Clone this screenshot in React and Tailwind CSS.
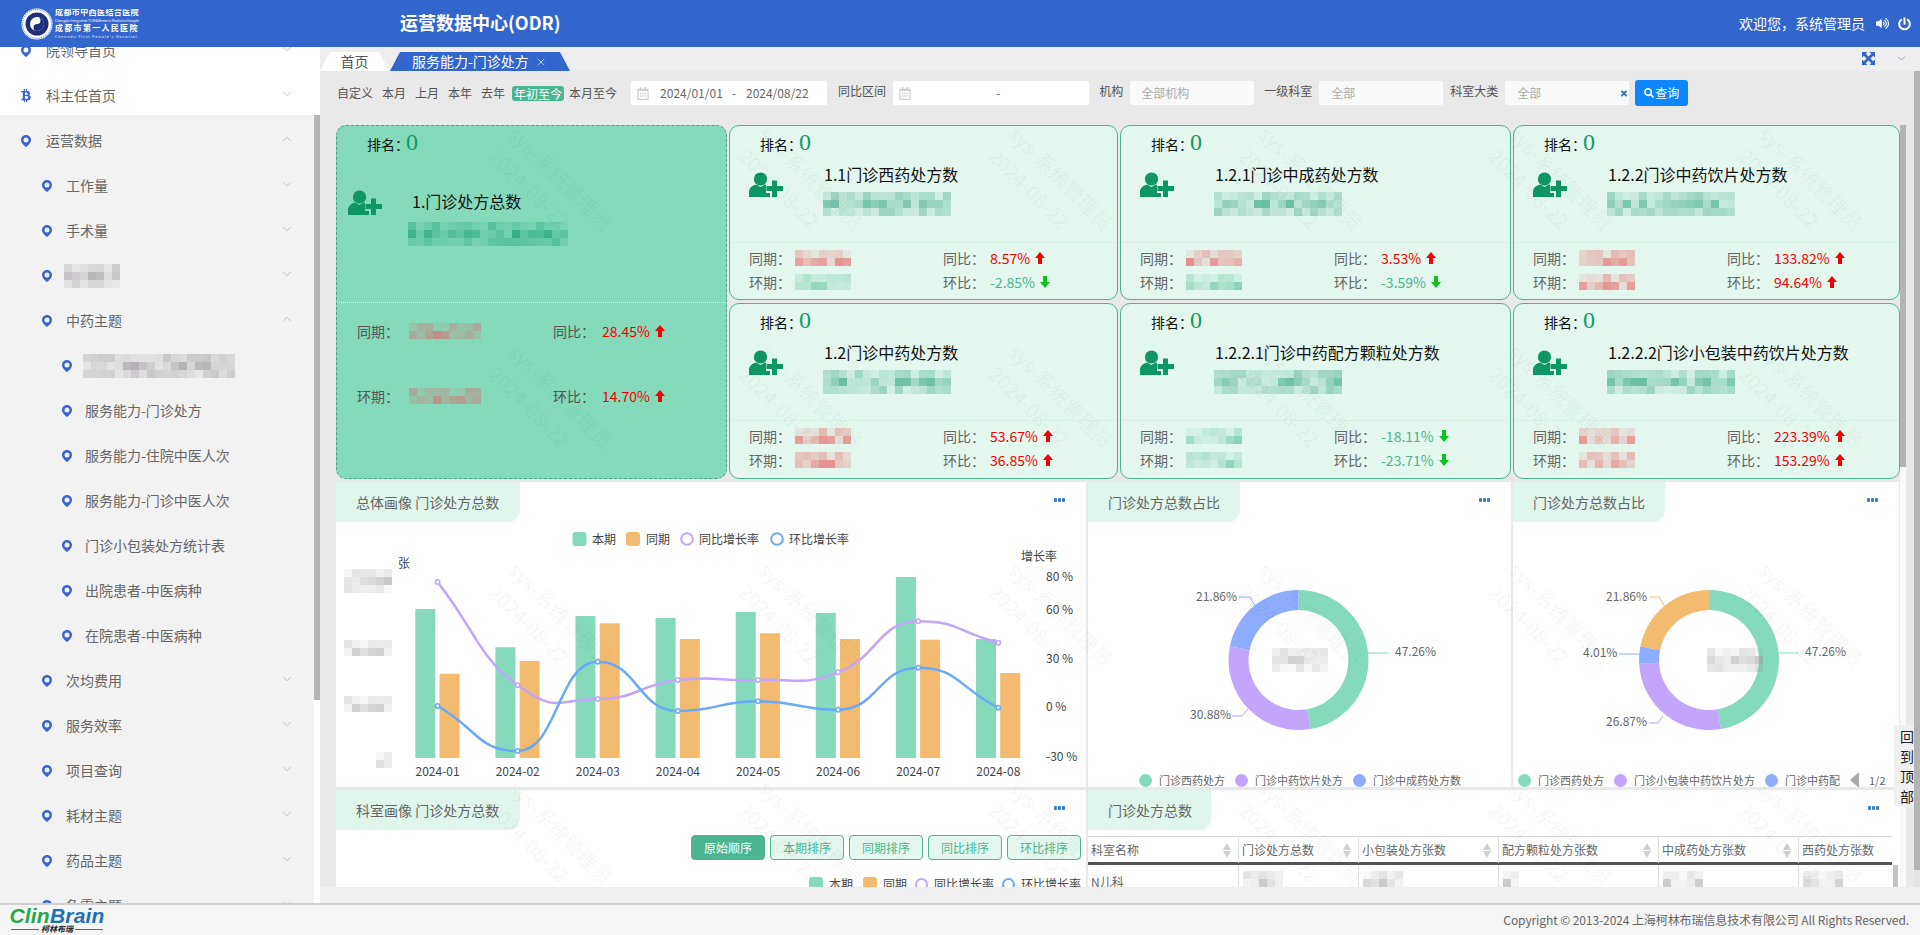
import React from "react";
import { ChevronDown, ChevronUp, X } from "lucide-react";
import { FaBtc, FaVolumeUp, FaPowerOff, FaSearch, FaRegCalendarAlt, FaTimes } from "react-icons/fa";

const FONT = '"Noto Sans CJK SC","Noto Sans",sans-serif';

function rng(seed) {
  let s = seed * 9301 + 49297;
  return () => {
    s = (s * 9301 + 49297) % 233280;
    return s / 233280;
  };
}

function Mosaic({ cols, rows = 3, color = [60, 170, 135], seed = 1, max = 0.75, className = "" }) {
  const r = rng(seed);
  return (
    <div className={"flex flex-col shrink-0 " + className}>
      {Array.from({ length: rows }).map((_, y) => (
        <div key={y} className="flex">
          {Array.from({ length: cols }).map((_, x) => {
            const edge = y === 0 && rows > 1 ? 0.6 : y === rows - 1 && rows > 2 ? 0.6 : 1;
            const a = (0.2 + r() * 0.8) * max * edge;
            return (
              <div
                key={x}
                className="w-[8px] h-[8px]"
                style={{ backgroundColor: `rgba(${color[0]},${color[1]},${color[2]},${a.toFixed(2)})` }}
              />
            );
          })}
        </div>
      ))}
    </div>
  );
}

function Pin({ className = "" }) {
  return (
    <svg viewBox="0 0 10 12" className={"w-[10px] h-[12px] shrink-0 " + className}>
      <path
        fillRule="evenodd"
        fill="#3a63d0"
        d="M5 0C2.2 0 0 2.2 0 5c0 3 3.2 5.6 5 7 1.8-1.4 5-4 5-7 0-2.8-2.2-5-5-5zm0 2.5a2.5 2.5 0 1 1 0 5 2.5 2.5 0 0 1 0-5z"
      />
    </svg>
  );
}

function SideRow({ label, level = 0, icon, chevron, mosaic }) {
  const pad = level === 0 ? "pl-[21px]" : level === 1 ? "pl-[42px]" : "pl-[62px]";
  const gap = level === 0 ? "gap-[15px]" : level === 1 ? "gap-[14px]" : "gap-[13px]";
  return (
    <div className={"h-[45px] flex items-center pr-[26px] text-[14px] text-[#666] " + pad + " " + gap}>
      {icon === "btc" ? <FaBtc className="w-[10px] h-[13px] text-[#3a63d0] shrink-0" /> : <Pin />}
      {mosaic ? <Mosaic cols={mosaic} color={[150, 145, 150]} seed={mosaic} className="-ml-[2px]" /> : <span>{label}</span>}
      <span className="flex-1" />
      {chevron === "down" && <ChevronDown size={14} strokeWidth={1} className="text-[#999] -mt-[4px]" />}
      {chevron === "up" && <ChevronUp size={14} strokeWidth={1} className="text-[#999] -mt-[4px]" />}
    </div>
  );
}

function Sidebar() {
  return (
    <div className="relative w-[320px] h-full overflow-hidden bg-white shrink-0">
      <div className="-mt-[19px]">
        <SideRow label="院领导首页" chevron="down" />
        <SideRow label="科主任首页" icon="btc" chevron="down" />
        <div className="-mt-[3px] pt-[3px] bg-[#f2f2f2] h-[900px]">
          <SideRow label="运营数据" chevron="up" />
          <SideRow level={1} label="工作量" chevron="down" />
          <SideRow level={1} label="手术量" chevron="down" />
          <SideRow level={1} mosaic={7} chevron="down" />
          <SideRow level={1} label="中药主题" chevron="up" />
          <SideRow level={2} mosaic={19} />
          <SideRow level={2} label="服务能力-门诊处方" />
          <SideRow level={2} label="服务能力-住院中医人次" />
          <SideRow level={2} label="服务能力-门诊中医人次" />
          <SideRow level={2} label="门诊小包装处方统计表" />
          <SideRow level={2} label="出院患者-中医病种" />
          <SideRow level={2} label="在院患者-中医病种" />
          <SideRow level={1} label="次均费用" chevron="down" />
          <SideRow level={1} label="服务效率" chevron="down" />
          <SideRow level={1} label="项目查询" chevron="down" />
          <SideRow level={1} label="耗材主题" chevron="down" />
          <SideRow level={1} label="药品主题" chevron="down" />
          <SideRow level={1} label="急需主题" chevron="down" />
        </div>
      </div>
      <div className="absolute right-0 top-0 bottom-0 w-[6px] bg-white">
        <div className="mt-[68px] h-[585px] bg-[#b4b4b4]" />
      </div>
    </div>
  );
}

function HospitalLogo() {
  return (
    <svg viewBox="0 0 32 32" className="w-[32px] h-[32px] shrink-0">
      <circle cx="16" cy="16" r="15.5" fill="#fff" />
      <circle cx="16" cy="16" r="14.5" fill="none" stroke="#3366cc" strokeWidth="1" strokeDasharray="1 1.2" />
      <circle cx="16" cy="16" r="11.5" fill="#1c2f78" />
      <circle cx="16" cy="16" r="7" fill="#fff" />
      <path d="M16 9a7 7 0 0 1 0 14 3.5 3.5 0 0 1 0-7 3.5 3.5 0 0 0 0-7z" fill="#1c2f78" />
    </svg>
  );
}

function Header() {
  return (
    <div className="h-[47px] bg-[#3366cc] flex items-center text-white shrink-0 relative z-20">
      <div className="pl-[21px] w-[400px] flex items-center gap-[2px] shrink-0">
        <HospitalLogo />
        <div className="flex flex-col leading-none w-[84px] overflow-hidden">
          <span className="text-[8px] font-bold tracking-[0.4px] h-[9px] whitespace-nowrap" style={{ fontFamily: '"Liberation Serif","Noto Sans CJK SC",serif' }}>成都市中西医结合医院</span>
          <span className="text-[3.5px] h-[7px] pt-[1px] whitespace-nowrap">Chengdu Integrated TCM&Western Medicine Hospital</span>
          <span className="text-[8px] font-bold tracking-[1.3px] h-[9px] whitespace-nowrap" style={{ fontFamily: '"Liberation Serif","Noto Sans CJK SC",serif' }}>成都市第一人民医院</span>
          <span className="text-[3.5px] pt-[1px] tracking-[1px] whitespace-nowrap">Chengdu First People's Hospital</span>
        </div>
      </div>
      <div className="text-[18px] font-bold -mt-[3px]">运营数据中心(ODR)</div>
      <div className="flex-1" />
      <div className="text-[14px] whitespace-nowrap">欢迎您，系统管理员</div>
      <FaVolumeUp className="ml-[11px] w-[13px] h-[13px]" />
      <FaPowerOff className="ml-[9px] mr-[9px] w-[13px] h-[14px]" />
    </div>
  );
}

function Field({ label, className = "" }) {
  return (
    <div className={"flex items-center " + className}>
      <span className="text-[12px] text-[#555] -mt-[4px] whitespace-nowrap">{label}</span>
    </div>
  );
}

function FilterBar() {
  return (
    <div className="flex items-center h-[26px] mt-[9px] pl-[17px] text-[12px] text-[#555] whitespace-nowrap">
      <span>自定义</span>
      <span className="ml-[9px]">本月</span>
      <span className="ml-[9px]">上月</span>
      <span className="ml-[9px]">本年</span>
      <span className="ml-[9px]">去年</span>
      <span className="ml-[7px] px-[2px] bg-[#4cb592] text-white rounded-[3px] leading-[15px]">年初至今</span>
      <span className="ml-[5px]">本月至今</span>
      <div className="ml-[13px] w-[198px] h-[26px] bg-white border border-[#eaeaea] rounded-[3px] flex items-center pl-[6px] text-[#666]">
        <FaRegCalendarAlt className="w-[12px] h-[13px] text-[#cfcfcf]" />
        <span className="ml-[11px]">2024/01/01</span>
        <span className="ml-[9px]">-</span>
        <span className="ml-[10px]">2024/08/22</span>
      </div>
      <Field label="同比区间" className="ml-[10px]" />
      <div className="ml-[6px] w-[198px] h-[26px] bg-white border border-[#eaeaea] rounded-[3px] flex items-center pl-[6px] text-[#666]">
        <FaRegCalendarAlt className="w-[12px] h-[13px] text-[#cfcfcf]" />
        <span className="ml-[85px]">-</span>
      </div>
      <Field label="机构" className="ml-[9px]" />
      <div className="ml-[6px] w-[126px] h-[26px] bg-[#fafafa] border border-[#eaeaea] rounded-[3px] flex items-center pl-[11px] text-[#aaa]">全部机构</div>
      <Field label="一级科室" className="ml-[9px]" />
      <div className="ml-[6px] w-[126px] h-[26px] bg-[#fafafa] border border-[#eaeaea] rounded-[3px] flex items-center pl-[12px] text-[#aaa]">全部</div>
      <Field label="科室大类" className="ml-[6px]" />
      <div className="ml-[6px] w-[126px] h-[26px] bg-[#fafafa] border border-[#eaeaea] rounded-[3px] flex items-center pl-[12px] pr-[1px] text-[#aaa]">
        <span className="flex-1">全部</span>
        <FaTimes className="w-[8px] h-[9px] text-[#2f6fb0]" />
      </div>
      <button className="ml-[5px] w-[53px] h-[26px] bg-[#0e86ff] text-white rounded-[3px] flex items-center justify-center gap-[1px] text-[12px]">
        <FaSearch className="w-[10px] h-[10px]" />
        查询
      </button>
    </div>
  );
}

function PersonPlus({ bg }) {
  return (
    <svg viewBox="0 0 34 25" className="w-[34px] h-[25px] shrink-0">
      <circle cx="11.5" cy="7" r="6.6" fill="#0f9665" />
      <path d="M0 25v-5c0-4 3-6.5 7-7.5l4.5 2.5 4.5-2.5c4 1 7 3.5 7 7.5v5z" fill="#0f9665" />
      <path d="M25.5 8v17M17 16.5h17" stroke={bg} strokeWidth="9" />
      <path d="M25.5 8.5v16.5M17.5 16.5h16.5" stroke="#0f9665" strokeWidth="5" />
    </svg>
  );
}

function ExpandIcon() {
  return (
    <svg viewBox="0 0 13 13" className="w-[13px] h-[13px] mb-[6px] text-[#3366cc]">
      <path d="M0 0h5.5L0 5.5zM13 0v5.5L7.5 0zM0 13V7.5L5.5 13zM13 13H7.5L13 7.5z" fill="currentColor" />
      <path d="M2 2l9 9M11 2l-9 9" stroke="currentColor" strokeWidth="2.6" />
    </svg>
  );
}

function Arrow({ up }) {
  return (
    <svg viewBox="0 0 10 12" className="w-[10px] h-[12px] shrink-0 ml-[5px]">
      {up ? (
        <path d="M5 0l5 6H7v6H3V6H0z" fill="#f40000" />
      ) : (
        <path d="M3 0h4v6h3l-5 6-5-6h3z" fill="#10c020" />
      )}
    </svg>
  );
}

function Val({ v }) {
  const up = !v.startsWith("-");
  return (
    <span className="flex items-center">
      <span className={up ? "text-[#f40000]" : "text-[#4cb592]"}>{v}</span>
      <Arrow up={up} />
    </span>
  );
}

const RED = [230, 110, 110];
const GRN = [110, 200, 165];

function Rank() {
  return (
    <div className="flex items-center pl-[30px] pt-[5px] h-[32px]">
      <span className="text-[14px] text-[#111]">排名：</span>
      <span className="text-[24px] text-[#119a6c] -mt-[6px] -ml-[3px] leading-none" style={{ fontFamily: '"Liberation Serif",serif' }}>0</span>
    </div>
  );
}

function Card({ title, t1, t2, v1, v2, s, ct1 = RED, ct2 = GRN }) {
  return (
    <div className="bg-[#e3f7ee] border border-[#4db391] rounded-[10px] h-full flex flex-col overflow-hidden">
      <div className="h-[116px] relative shrink-0">
        <Rank />
        <div className="flex pl-[19px] pt-[14px]">
          <PersonPlus bg="#e3f7ee" />
          <div className="ml-[41px] -mt-[10px]">
            <div className="text-[16px] text-[#111] h-[24px] leading-[24px] whitespace-nowrap">{title}</div>
            <Mosaic cols={16} color={[60, 170, 135]} seed={s} className="mt-[6px] -ml-[1px]" />
          </div>
        </div>
      </div>
      <div className="flex-1 border-t border-dotted border-[#cfe8dc] pl-[19px] pt-[3px] text-[14px] text-[#666]">
        <Row label="同期" label2="同比" ct={ct1} v={v1} s={s + 3} w={t1} />
        <Row label="环期" label2="环比" ct={ct2} v={v2} s={s + 5} w={t2} />
      </div>
    </div>
  );
}

function Row({ label, label2, ct, v, s, w = 7 }) {
  return (
    <div className="flex items-center h-[24px]">
      <span className="w-[46px] shrink-0">{label}：</span>
      <div className="w-[148px] shrink-0">
        <Mosaic cols={w} rows={2} color={ct} seed={s} />
      </div>
      <span className="w-[47px] shrink-0">{label2}：</span>
      <Val v={v} />
    </div>
  );
}

function BigCard() {
  return (
    <div className="row-span-2 bg-[#85dabb] border border-dashed border-[#45a585] rounded-[10px] flex flex-col overflow-hidden">
      <div className="h-[177px] shrink-0 border-b border-dotted border-white/80">
        <Rank />
        <div className="flex pl-[11px] pt-[32px]">
          <PersonPlus bg="#85dabb" />
          <div className="ml-[29px] -mt-[1px]">
            <div className="text-[16px] text-[#111] h-[24px] leading-[24px] pl-[1px] whitespace-nowrap">1.门诊处方总数</div>
            <Mosaic cols={20} color={[30, 160, 115]} seed={17} className="mt-[9px] -ml-[3px]" />
          </div>
        </div>
      </div>
      <div className="flex-1 pl-[20px] text-[14px] text-[#555] pt-[13px]">
        <div className="flex items-center h-[30px]">
          <span className="w-[52px] shrink-0">同期：</span>
          <div className="w-[144px] shrink-0"><Mosaic cols={9} rows={2} color={[215, 110, 110]} seed={33} /></div>
          <span className="w-[49px] shrink-0">同比：</span>
          <Val v="28.45%" />
        </div>
        <div className="flex items-center h-[30px] mt-[35px]">
          <span className="w-[52px] shrink-0">环期：</span>
          <div className="w-[144px] shrink-0"><Mosaic cols={9} rows={2} color={[215, 110, 110]} seed={41} /></div>
          <span className="w-[49px] shrink-0">环比：</span>
          <Val v="14.70%" />
        </div>
      </div>
    </div>
  );
}

function Dots() {
  return (
    <div className="flex gap-[1px] absolute top-[16px] right-[21px]">
      <i className="block w-[3px] h-[4px] bg-[#3a7cc7] rounded-[1px]" />
      <i className="block w-[3px] h-[4px] bg-[#3a7cc7] rounded-[1px]" />
      <i className="block w-[3px] h-[4px] bg-[#3a7cc7] rounded-[1px]" />
    </div>
  );
}

function PanelTitle({ children, w }) {
  return (
    <div className={"h-[40px] bg-[#e0f5ec] rounded-br-[12px] flex items-center pl-[20px] text-[14px] text-[#666] whitespace-nowrap " + w}>
      {children}
    </div>
  );
}

function smooth(pts) {
  let d = `M${pts[0][0]} ${pts[0][1]}`;
  for (let i = 0; i < pts.length - 1; i++) {
    const p0 = pts[i];
    const p1 = pts[i + 1];
    const prev = pts[i - 1] || p0;
    const next = pts[i + 2] || p1;
    const dx = (p1[0] - p0[0]) * 0.5;
    let m0 = (p1[1] - prev[1]) / (p1[0] - prev[0]);
    let m1 = (next[1] - p0[1]) / (next[0] - p0[0]);
    if ((p0[1] - prev[1]) * (p1[1] - p0[1]) < 0) m0 = 0;
    if ((next[1] - p1[1]) * (p1[1] - p0[1]) < 0) m1 = 0;
    d += ` C${p0[0] + dx} ${p0[1] + m0 * dx} ${p1[0] - dx} ${p1[1] - m1 * dx} ${p1[0]} ${p1[1]}`;
  }
  return d;
}

const MONTHS = ["2024-01", "2024-02", "2024-03", "2024-04", "2024-05", "2024-06", "2024-07", "2024-08"];
const GT = [609, 647.3, 616, 618, 612, 613, 577, 639];
const OT = [673.7, 661, 623.3, 639, 633.3, 639, 639.7, 673];
const PY = [582, 685.3, 699, 680, 680, 672.3, 621.3, 642.7];
const BY = [706, 751, 661.7, 711, 701.3, 709.7, 667.7, 707.7];

function LineBar() {
  const px = (i) => 437.6 + 80.1 * i;
  const pp = PY.map((y, i) => [px(i), y]);
  const bp = BY.map((y, i) => [px(i), y]);
  return (
    <svg viewBox="336 522 750 265" className="block w-[750px] h-[265px]" fontSize="12" fill="#444" style={{ fontFamily: FONT }}>
      <rect x="572.5" y="532" width="14" height="14" rx="3" fill="#85dabb" />
      <text x="592" y="543.5">本期</text>
      <rect x="626" y="532" width="14" height="14" rx="3" fill="#f2bb70" />
      <text x="646" y="543.5">同期</text>
      <circle cx="687" cy="539" r="5.8" fill="#fff" stroke="#c3a5fc" strokeWidth="2" />
      <text x="699" y="543.5">同比增长率</text>
      <circle cx="777" cy="539" r="5.8" fill="#fff" stroke="#6aa9fa" strokeWidth="2" />
      <text x="789" y="543.5">环比增长率</text>
      <text x="398" y="568">张</text>
      <text x="1021" y="561">增长率</text>
      {[["80 %", 581], ["60 %", 614], ["30 %", 663], ["0 %", 711], ["-30 %", 761]].map(([t, y]) => (
        <text key={t} x="1046" y={y}>{t}</text>
      ))}
      {MONTHS.map((m, i) => (
        <g key={m}>
          <rect x={415.3 + 80.1 * i} y={GT[i]} width="20" height={758 - GT[i]} fill="#85dabb" />
          <rect x={439.5 + 80.1 * i} y={OT[i]} width="20" height={758 - OT[i]} fill="#f2bb70" />
          <text x={437.6 + 80.1 * i} y="776" textAnchor="middle">{m}</text>
        </g>
      ))}
      <path d={smooth(pp)} fill="none" stroke="#c3a5fc" strokeWidth="2.5" />
      <path d={smooth(bp)} fill="none" stroke="#6aa9fa" strokeWidth="2.5" />
      {pp.map((p, i) => <circle key={i} cx={p[0]} cy={p[1]} r="2.2" fill="#fff" stroke="#c3a5fc" strokeWidth="1.5" />)}
      {bp.map((p, i) => <circle key={i} cx={p[0]} cy={p[1]} r="2.2" fill="#fff" stroke="#6aa9fa" strokeWidth="1.5" />)}
    </svg>
  );
}

function Donut({ cx, slices, labels, vb }) {
  const cy = 660;
  const R = 70;
  const r0 = 50;
  let a = -Math.PI / 2;
  const paths = slices.map(([pct, color], i) => {
    const b = a + (pct / 100) * Math.PI * 2;
    const pt = (rad, ang) => `${(cx + rad * Math.cos(ang)).toFixed(2)} ${(cy + rad * Math.sin(ang)).toFixed(2)}`;
    const large = b - a > Math.PI ? 1 : 0;
    const d = `M${pt(R, a)} A${R} ${R} 0 ${large} 1 ${pt(R, b)} L${pt(r0, b)} A${r0} ${r0} 0 ${large} 0 ${pt(r0, a)}Z`;
    a = b;
    return <path key={i} d={d} fill={color} />;
  });
  return (
    <svg viewBox={vb} className="block w-full h-[251px]" fontSize="12" fill="#666" style={{ fontFamily: FONT }}>
      {paths}
      {labels.map((l, i) => (
        <g key={i}>
          <path d={l.line} fill="none" stroke={l.c} strokeWidth="1" />
          <text x={l.x} y={l.y}>{l.t}</text>
        </g>
      ))}
    </svg>
  );
}

function Legend({ items, className = "", extra }) {
  return (
    <div className={"h-[14px] flex items-center text-[11px] text-[#666] whitespace-nowrap overflow-hidden " + className}>
      {items.map(([t, c], i) => (
        <React.Fragment key={t}>
          <span className={"w-[13px] h-[13px] rounded-full shrink-0 " + c + (i ? " ml-[10px]" : "")} />
          <span className="ml-[7px]">{t}</span>
        </React.Fragment>
      ))}
      {extra}
    </div>
  );
}

function Sort() {
  return (
    <span className="flex flex-col gap-[1px] shrink-0 w-[8px]">
      <span className="w-0 h-0 border-x-[4px] border-x-transparent border-b-[7px] border-b-[#d0d0d0]" />
      <span className="w-0 h-0 border-x-[4px] border-x-transparent border-t-[7px] border-t-[#d0d0d0]" />
    </span>
  );
}

const COLS = [
  ["科室名称", "w-[150px]"],
  ["门诊处方总数", "w-[120px]"],
  ["小包装处方张数", "w-[140px]"],
  ["配方颗粒处方张数", "w-[160px]"],
  ["中成药处方张数", "w-[140px]"],
  ["西药处方张数", "w-[94px]"],
];

function DataTable() {
  return (
    <div className="relative mt-[6px] w-[804px]">
      <div className="flex h-[26px] border-t border-[#d5d5d5] text-[12px] text-[#666]">
        {COLS.map(([t, w], i) => (
          <div key={t} className={"h-[26px] flex items-center pl-[3px] pr-[7px] justify-between whitespace-nowrap overflow-hidden " + w + (i ? " border-l border-[#ddd]" : "")}>
            <span>{t}</span>
            {i < 5 && <Sort />}
          </div>
        ))}
      </div>
      <div className="h-[3px] bg-[#555]" />
      <div className="flex h-[36px] text-[12px] text-[#666]">
        {COLS.map(([t, w], i) => (
          <div key={t} className={"h-[36px] pl-[3px] pt-[6px] " + w + (i ? " border-l border-[#ddd]" : "")}>
            {i === 0 ? <span className="block pt-[2px]">N儿科</span> : <Mosaic cols={i === 3 ? 2 : 5} color={[150, 150, 150]} seed={i * 5} max={0.5} className="ml-[1px]" />}
          </div>
        ))}
      </div>
      <div className="absolute right-[-6px] top-[29px] w-[5px] h-[40px] bg-[#c4c4c4]" />
    </div>
  );
}

function Watermarks() {
  return (
    <div className="absolute inset-0 overflow-hidden pointer-events-none z-10">
      <div className="grid grid-cols-[repeat(6,250px)] auto-rows-[218px] ml-[186px] mt-[76px]">
        {Array.from({ length: 24 }).map((_, i) => (
          <div key={i} className="relative">
            <span className="absolute left-0 top-0 origin-top-left rotate-45 whitespace-nowrap text-[20px] leading-none text-black/[0.05] translate-x-[14px]">sys-系统管理员</span>
            <span className="absolute left-[-6px] top-[22px] origin-top-left rotate-45 whitespace-nowrap text-[20px] leading-none text-black/[0.05]">2024-08-22</span>
          </div>
        ))}
      </div>
    </div>
  );
}

function SortButton({ children, active }) {
  return (
    <button className={"w-[74px] h-[25px] rounded-[4px] border border-[#4cb592] " + (active ? "bg-[#4cb592] text-white" : "bg-[#e3f7ee] text-[#4cb592]")}>
      {children}
    </button>
  );
}

function Main() {
  return (
    <div className="relative flex-1 h-full flex flex-col bg-[#e9e9e9] overflow-hidden">
      <div className="h-[24px] bg-[#eeeeee] shrink-0 flex items-end relative">
        <div className="w-[69px] h-[19px] bg-white text-[14px] text-[#555] flex items-center justify-center [clip-path:polygon(10px_0,calc(100%-10px)_0,100%_100%,0_100%)]">首页</div>
        <div className="ml-[1px] w-[180px] h-[19px] bg-[#3366cc] text-[14px] text-white flex items-center pl-[22px] whitespace-nowrap [clip-path:polygon(10px_0,calc(100%-10px)_0,100%_100%,0_100%)]">
          服务能力-门诊处方
          <X size={12} strokeWidth={1.5} className="ml-[6px] text-[#e4ebfb]" />
        </div>
        <div className="flex-1" />
        <ExpandIcon />
        <ChevronDown size={13} strokeWidth={1} className="text-[#3366cc] ml-[20px] mr-[12px] mb-[6px]" />
      </div>
      <div className="flex-1 overflow-hidden pl-[16px]">
        <div className="-ml-[16px]"><FilterBar /></div>
        <div className="mt-[19px] grid grid-cols-[391px_389px_391px_387px] grid-rows-[175px_176px] gap-x-[2px] gap-y-[3px] h-[354px]">
          <BigCard />
          <Card title="1.1门诊西药处方数" v1="8.57%" v2="-2.85%" s={3} />
          <Card title="1.2.1门诊中成药处方数" v1="3.53%" v2="-3.59%" s={7} />
          <Card title="1.2.2门诊中药饮片处方数" v1="133.82%" v2="94.64%" s={11} ct2={RED} />
          <Card title="1.2门诊中药处方数" v1="53.67%" v2="36.85%" s={13} ct2={RED} />
          <Card title="1.2.2.1门诊中药配方颗粒处方数" v1="-18.11%" v2="-23.71%" s={19} ct1={GRN} />
          <Card title="1.2.2.2门诊小包装中药饮片处方数" v1="223.39%" v2="153.29%" s={23} ct2={RED} />
        </div>
        <div className="mt-[3px] grid grid-cols-[750px_423px_386px] gap-x-[2px] h-[305px]">
          <div className="relative bg-white overflow-hidden">
            <PanelTitle w="w-[184px]">总体画像 门诊处方总数</PanelTitle>
            <Dots />
            <LineBar />
            <div className="absolute left-[8px] top-[87px]"><Mosaic cols={6} color={[150, 150, 150]} seed={4} max={0.55} /></div>
            <div className="absolute left-[8px] top-[158px]"><Mosaic cols={6} rows={2} color={[150, 150, 150]} seed={6} max={0.55} /></div>
            <div className="absolute left-[8px] top-[214px]"><Mosaic cols={6} rows={2} color={[150, 150, 150]} seed={6} max={0.55} /></div>
            <div className="absolute left-[40px] top-[270px]"><Mosaic cols={2} rows={2} color={[150, 150, 150]} seed={9} max={0.4} /></div>
          </div>
          <div className="relative bg-white overflow-hidden">
            <PanelTitle w="w-[152px]">门诊处方总数占比</PanelTitle>
            <Dots />
            <Donut
              cx={1298.5}
              vb="1088 522 423 251"
              slices={[[47.26, "#85dabb"], [30.88, "#c3a5fc"], [21.86, "#8dacfb"]]}
              labels={[
                { t: "47.26%", x: 1395, y: 656, c: "#85dabb", line: "M1368 653h21" },
                { t: "21.86%", x: 1196, y: 601, c: "#8dacfb", line: "M1239 597h11l5 9" },
                { t: "30.88%", x: 1190, y: 719, c: "#c3a5fc", line: "M1232 716h10l6-7" },
              ]}
            />
            <Legend className="pl-[51px]" items={[["门诊西药处方", "bg-[#85dabb]"], ["门诊中药饮片处方", "bg-[#c3a5fc]"], ["门诊中成药处方数", "bg-[#8dacfb]"]]} />
            <div className="absolute left-[184px] top-[166px]"><Mosaic cols={7} color={[150, 150, 150]} seed={8} max={0.5} /></div>
          </div>
          <div className="relative bg-white overflow-hidden">
            <PanelTitle w="w-[152px]">门诊处方总数占比</PanelTitle>
            <Dots />
            <Donut
              cx={1710}
              vb="1514 522 386 251"
              slices={[[47.26, "#85dabb"], [26.87, "#c3a5fc"], [4.01, "#8dacfb"], [21.86, "#f2bb70"]]}
              labels={[
                { t: "47.26%", x: 1806, y: 656, c: "#85dabb", line: "M1780 653h20" },
                { t: "21.86%", x: 1607, y: 601, c: "#f2bb70", line: "M1650 597h10l5 8" },
                { t: "4.01%", x: 1584, y: 657, c: "#8dacfb", line: "M1620 654h20" },
                { t: "26.87%", x: 1607, y: 726, c: "#c3a5fc", line: "M1650 723h9l5-7" },
              ]}
            />
            <Legend
              className="pl-[5px]"
              items={[["门诊西药处方", "bg-[#85dabb]"], ["门诊小包装中药饮片处方", "bg-[#c3a5fc]"], ["门诊中药配", "bg-[#8dacfb]"]]}
              extra={
                <span className="flex items-center ml-[10px]">
                  <span className="w-0 h-0 border-y-[8px] border-y-transparent border-r-[9px] border-r-[#aaa]" />
                  <span className="ml-[10px]">1/2</span>
                  <span className="ml-[9px] w-[1px] h-[13px] bg-[#555]" />
                </span>
              }
            />
            <div className="absolute left-[194px] top-[166px]"><Mosaic cols={7} color={[150, 150, 150]} seed={12} max={0.5} /></div>
          </div>
        </div>
        <div className="mt-[3px] grid grid-cols-[750px_812px] gap-x-[2px] h-[300px]">
          <div className="relative bg-white">
            <PanelTitle w="w-[184px]">科室画像 门诊处方总数</PanelTitle>
            <Dots />
            <div className="flex justify-end gap-[5px] pr-[5px] mt-[5px] text-[12px]">
              <SortButton active>原始顺序</SortButton>
              <SortButton>本期排序</SortButton>
              <SortButton>同期排序</SortButton>
              <SortButton>同比排序</SortButton>
              <SortButton>环比排序</SortButton>
            </div>
            <div className="flex justify-end items-center pr-[5px] mt-[15px] text-[12px] text-[#444]">
              <span className="w-[14px] h-[14px] rounded-[3px] bg-[#85dabb]" />
              <span className="ml-[6px]">本期</span>
              <span className="ml-[10px] w-[14px] h-[14px] rounded-[3px] bg-[#f2bb70]" />
              <span className="ml-[6px]">同期</span>
              <span className="ml-[8px] w-[13px] h-[13px] rounded-full border-2 border-[#c3a5fc]" />
              <span className="ml-[6px]">同比增长率</span>
              <span className="ml-[8px] w-[13px] h-[13px] rounded-full border-2 border-[#6aa9fa]" />
              <span className="ml-[6px]">环比增长率</span>
            </div>
          </div>
          <div className="relative bg-white">
            <PanelTitle w="w-[123px]">门诊处方总数</PanelTitle>
            <Dots />
            <DataTable />
          </div>
        </div>
      </div>
      <div className="h-[16px] bg-[#efefef] shrink-0 relative z-20" />
      <Watermarks />
      <div className="absolute right-0 top-[24px] bottom-[16px] w-[6px] bg-[#e4e4e4] z-20">
        <div className="h-[799px] bg-[#b4b4b4]" />
      </div>
      <div className="absolute right-[6px] top-[78px] bottom-[16px] w-[8px] bg-[#e9e9e9] z-20" />
      <div className="absolute right-[14px] top-[78px] bottom-[16px] w-[6px] bg-[#f9f9f9] z-20">
        <div className="h-[342px] bg-[#b4b4b4]" />
      </div>
      <div className="absolute right-[6px] top-[678px] w-[20px] h-[81px] bg-[#f0f0f0] z-30 text-[14px] leading-[20px] text-[#222] text-right pt-[1px]">
        <div>回</div>
        <div>到</div>
        <div>顶</div>
        <div>部</div>
      </div>
    </div>
  );
}

function Footer() {
  return (
    <div className="h-[32px] bg-[#f5f5f5] border-t-2 border-[#d0d0d0] flex items-center shrink-0 relative z-20">
      <div className="ml-[11px] w-[92px] flex flex-col items-center leading-none">
        <div className="text-[21px] font-bold italic tracking-[0.2px] h-[17px] leading-[17px]" style={{ fontFamily: '"Liberation Sans",sans-serif' }}>
          <span className="text-[#24a84a]">Clin</span>
          <span className="text-[#1f6fb2]">Brain</span>
        </div>
        <div className="flex items-center w-full mt-[1px]">
          <span className="flex-1 h-px bg-[#666]" />
          <span className="text-[8px] font-bold italic text-[#222] mx-[2px]">柯林布瑞</span>
          <span className="flex-1 h-px bg-[#666]" />
        </div>
      </div>
      <div className="flex-1" />
      <div className="text-[12px] text-[#666] pr-[11px] whitespace-nowrap tracking-[-0.09px]">Copyright © 2013-2024 上海柯林布瑞信息技术有限公司 All Rights Reserved.</div>
    </div>
  );
}

export default function App() {
  return (
    <div className="w-[1920px] h-[935px] flex flex-col overflow-hidden" style={{ fontFamily: FONT }}>
      <Header />
      <div className="flex-1 flex min-h-0">
        <Sidebar />
        <Main />
      </div>
      <Footer />
    </div>
  );
}
